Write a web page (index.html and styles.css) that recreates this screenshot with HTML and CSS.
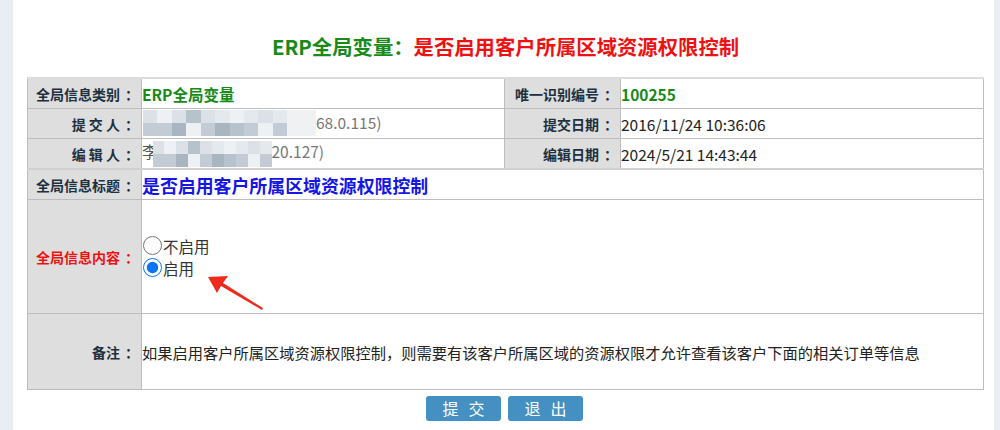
FILE: index.html
```html
<!DOCTYPE html>
<html>
<head>
    <meta charset="utf-8">
    <title>全局变量</title>
    <link rel="stylesheet" href="styles.css">
</head>
<body>
<div class="page">
    <h1 class="title"><span class="t-green">ERP全局变量：</span><span class="t-red">是否启用客户所属区域资源权限控制</span></h1>
    <table class="info">
        <colgroup>
            <col class="c1"><col class="c2"><col class="c3"><col class="c4">
        </colgroup>
        <tr class="r">
            <td class="lbl">全局信息类别<span class="cl">：</span></td>
            <td class="val green">ERP全局变量</td>
            <td class="lbl">唯一识别编号<span class="cl">：</span></td>
            <td class="val green">100255</td>
        </tr>
        <tr class="r">
            <td class="lbl">提 交 人<span class="cl">：</span></td>
            <td class="val gray"><span class="mosaic m1"><i></i><i></i><i></i><i></i><i></i><i></i><i></i><i></i><i></i><i></i><i></i><i></i><i></i><i></i><i></i><i></i><i></i><i></i><i></i><i></i><i></i><i></i><i></i><i></i></span>68.0.115)</td>
            <td class="lbl">提交日期<span class="cl">：</span></td>
            <td class="val">2016/11/24 10:36:06</td>
        </tr>
        <tr class="r">
            <td class="lbl">编 辑 人<span class="cl">：</span></td>
            <td class="val gray"><span class="li">李</span><span class="mosaic m2"><i></i><i></i><i></i><i></i><i></i><i></i><i></i><i></i><i></i><i></i><i></i><i></i><i></i><i></i><i></i><i></i><i></i><i></i><i></i><i></i></span>20.127)</td>
            <td class="lbl">编辑日期<span class="cl">：</span></td>
            <td class="val">2024/5/21 14:43:44</td>
        </tr>
        <tr class="r rtitle">
            <td class="lbl">全局信息标题<span class="cl">：</span></td>
            <td class="val blue" colspan="3">是否启用客户所属区域资源权限控制</td>
        </tr>
        <tr class="rcontent">
            <td class="lbl red">全局信息内容<span class="cl">：</span></td>
            <td class="val opts" colspan="3">
                <label class="opt"><input type="radio" name="v"><span>不启用</span></label>
                <label class="opt"><input type="radio" name="v" checked><span>启用</span></label>
                <svg class="arrow" width="60" height="40" viewBox="0 0 60 40">
                    <polygon points="2,1 22,0 17,7 57,32 56,34 15,10 11,17" fill="#ee2a1c"/>
                </svg>
            </td>
        </tr>
        <tr class="rnote">
            <td class="lbl">备注<span class="cl">：</span></td>
            <td class="val note" colspan="3">如果启用客户所属区域资源权限控制，则需要有该客户所属区域的资源权限才允许查看该客户下面的相关订单等信息</td>
        </tr>
    </table>
    <div class="btns">
        <button class="btn">提交</button>
        <button class="btn">退出</button>
    </div>
</div>
</body>
</html>
```

FILE: styles.css
```css
html, body {
    margin: 0;
    padding: 0;
}
body {
    background: #e9eef3;
    font-family: "Noto Sans CJK SC", "Microsoft YaHei", sans-serif;
    color: #222;
}
.page {
    margin: 0 6px 0 13px;
    background: #fff;
    height: 430px;
    padding: 30px 10px 0 14px;
    box-sizing: border-box;
}
.title {
    margin: 0 0 15px 0;
    text-align: center;
    font-size: 20.35px;
    line-height: 32px;
    font-weight: bold;
}
.t-green {
    color: #178a17;
}
.t-red {
    color: #ee1111;
}
.info {
    width: 100%;
    border-collapse: collapse;
    border-top: 2px solid #dcdcdc;
    table-layout: fixed;
}
.info td {
    border: 1px solid #bdbdbd;
    padding: 0;
}
.c1 { width: 114px; }
.c2 { width: 363px; }
.c3 { width: 116px; }
.r td {
    height: 29px;
}
.rtitle td {
    border-top: 2px solid #d0d0d0;
}
.lbl {
    background: #dedede;
    text-align: right;
    padding-right: 2px !important;
    font-size: 14px;
    font-weight: bold;
    color: #1c3040;
    white-space: nowrap;
}
.lbl .cl {
    padding-left: 5px;
}
.lbl.red {
    color: #ee1111;
}
.val {
    padding-left: 0 !important;
    font-size: 15.5px;
    color: #222;
    white-space: nowrap;
}
.green {
    color: #178a17;
    font-weight: bold;
}
.gray {
    color: #777;
}
.blue {
    color: #1515e6;
    font-weight: bold;
    font-size: 17.9px;
}
.mosaic {
    display: inline-grid;
    grid-template-rows: 13px 13px;
    grid-auto-flow: column;
    vertical-align: middle;
}
.mosaic i {
    display: block;
    background: #e4e9ed;
}
.m1 {
    width: 173px;
    grid-template-columns: repeat(12, 1fr);
    margin: -4px 0 0 1px;
}
.m2 {
    width: 119px;
    grid-template-columns: repeat(10, 1fr);
    margin: 0 0 0 -5px;
}
.mosaic i:nth-child(2n) { background: #c3ccd4; }
.mosaic i:nth-child(4n+1) { background: #dbe1e6; }
.mosaic i:nth-child(6n) { background: #a9b6c1; }
.mosaic i:nth-child(5n+3) { background: #eef1f3; }
.mosaic i:nth-child(7n) { background: #b6c2cc; }
.m1 i:nth-child(n+21) { background: #f0f1f2; }
.li {
    color: #555;
}
.rcontent td {
    height: 113px;
}
.opts {
    position: relative;
    vertical-align: middle;
}
.opt {
    display: flex;
    align-items: center;
    height: 22px;
    font-size: 15.5px;
    color: #333;
}
.opt input {
    width: 19px;
    height: 19px;
    margin: 0 1px 0 1px;
    accent-color: #0b74f5;
}
.arrow {
    position: absolute;
    left: 64px;
    top: 76px;
}
.rnote td {
    height: 75px;
}
.val.note {
    font-size: 15.25px;
    color: #222;
}
.btns {
    display: flex;
    justify-content: center;
    gap: 7px;
    margin-top: 6px;
    padding-right: 2px;
}
.btn {
    width: 75px;
    height: 25px;
    border: none;
    border-radius: 3px;
    background: #4590c2;
    color: #fff;
    font-family: "Noto Sans CJK SC", sans-serif;
    font-size: 16px;
    letter-spacing: 10px;
    padding: 0 0 0 10px;
    line-height: 25px;
}
```
